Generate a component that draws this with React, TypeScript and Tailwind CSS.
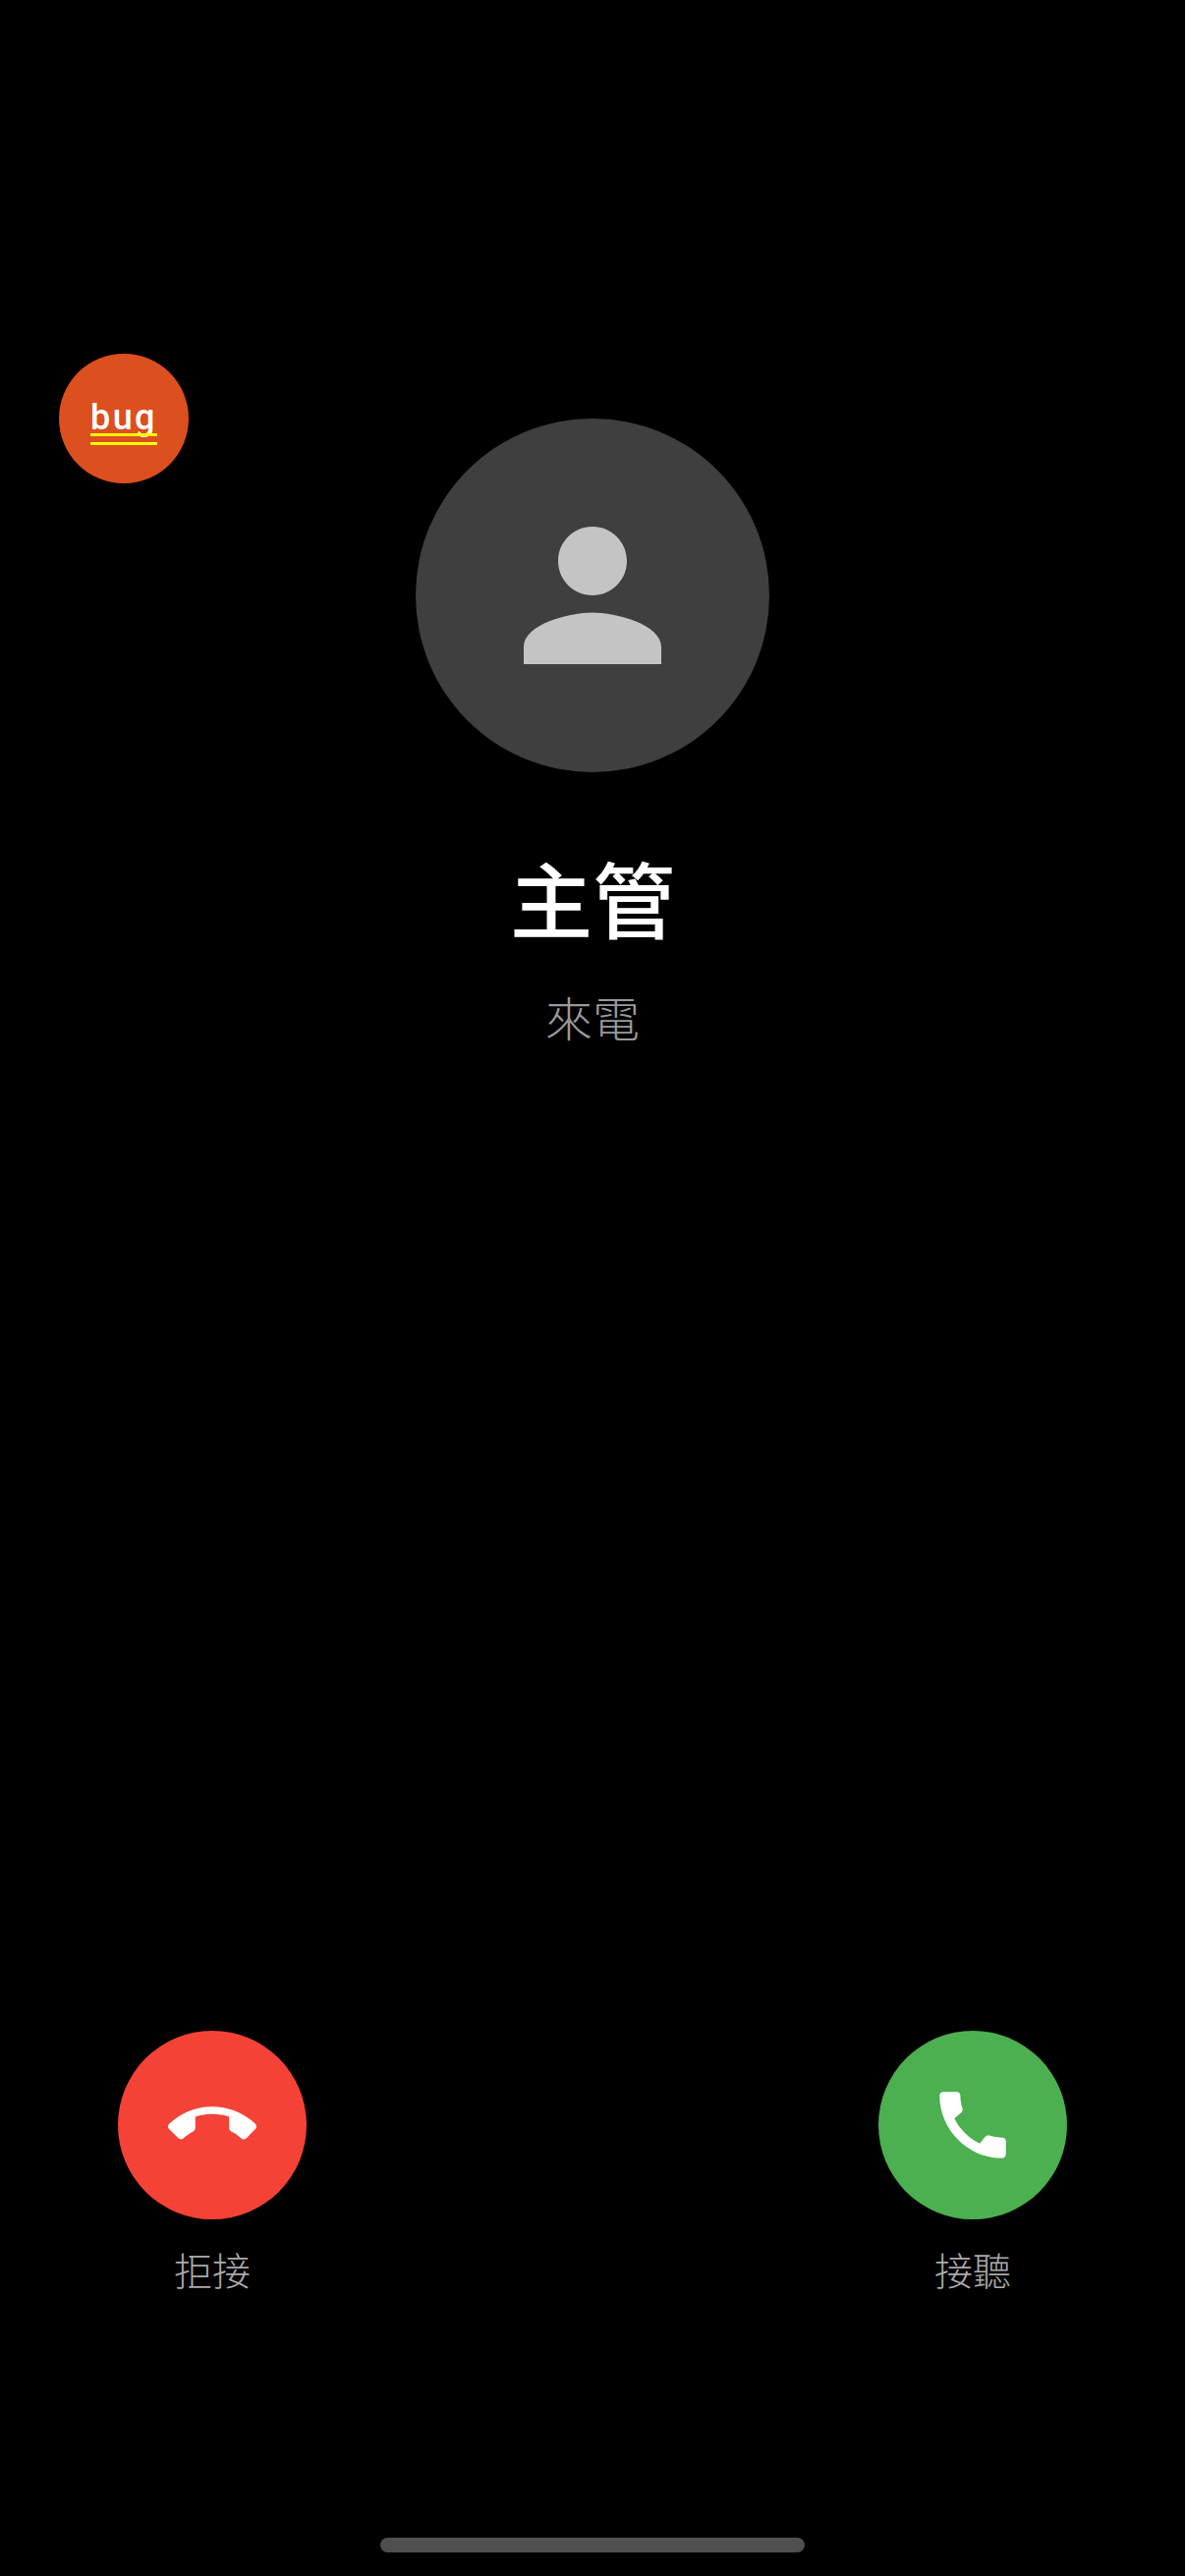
function PersonIcon() {
    return (
        <svg viewBox="0 0 24 24" className="h-[210px] w-[210px] fill-[#c4c4c4]">
            <path d="M12 12c2.21 0 4-1.79 4-4s-1.79-4-4-4-4 1.79-4 4 1.79 4 4 4zm0 2c-2.67 0-8 1.34-8 4v2h16v-2c0-2.66-5.33-4-8-4z" />
        </svg>
    );
}

function CallEndIcon() {
    return (
        <svg viewBox="0 0 24 24" className="h-[90px] w-[90px] fill-white">
            <path d="M12 9c-1.6 0-3.15.25-4.6.72v3.1c0 .39-.23.74-.56.9-.98.49-1.87 1.12-2.66 1.85-.18.18-.43.28-.7.28-.28 0-.53-.11-.71-.29L.29 13.08c-.18-.17-.29-.42-.29-.7 0-.28.11-.53.29-.71C3.34 8.78 7.46 7 12 7s8.66 1.78 11.71 4.67c.18.18.29.43.29.71 0 .28-.11.53-.29.71l-2.48 2.48c-.18.18-.43.29-.71.29-.27 0-.52-.11-.7-.28-.79-.74-1.69-1.36-2.67-1.85-.33-.16-.56-.51-.56-.9v-3.1C15.15 9.25 13.6 9 12 9z" />
        </svg>
    );
}

function CallIcon() {
    return (
        <svg viewBox="0 0 24 24" className="h-[90px] w-[90px] fill-white">
            <path d="M20.01 15.38c-1.23 0-2.42-.2-3.53-.56-.35-.12-.74-.03-1.01.24l-1.57 1.97c-2.83-1.35-5.48-3.9-6.89-6.83l1.95-1.66c.27-.28.35-.67.24-1.02-.37-1.11-.56-2.3-.56-3.53 0-.54-.45-.99-.99-.99H4.19C3.65 3 3 3.24 3 3.99 3 13.28 10.73 21 20.01 21c.71 0 .99-.63.99-1.18v-3.45c0-.54-.45-.99-.99-.99z" />
        </svg>
    );
}

export default function App() {
    return (
        <div lang="zh-Hant" className="relative flex h-[2622px] w-[1206px] flex-col items-center bg-black font-['Noto_Sans_CJK_TC',sans-serif]">
            {/* Floating bug button */}
            <div className="absolute left-[60px] top-[360px] flex h-[132px] w-[132px] flex-col items-center rounded-full bg-[#dc4f1e] pt-[47px]">
                <span className="font-['Roboto',sans-serif] text-[36px] font-medium leading-[36px] tracking-[2.4px] text-white">
                    bug
                </span>
                <div className="-mt-[2px] h-[12px] w-[68px] border-y-[3px] border-[#ffff00]" />
            </div>

            <div className="mt-[426px] flex h-[360px] w-[360px] items-center justify-center rounded-full bg-[#3f3f3f]">
                <PersonIcon />
            </div>

            <h1 className="mt-[67px] text-[84px] font-medium leading-[120px] text-white">主管</h1>
            <p className="mt-[26px] text-[48px] font-light leading-[70px] text-[#999999]">來電</p>

            {/* Reject / answer */}
            <div className="mt-auto flex w-full justify-between px-[120px]">
                <div className="flex w-[192px] flex-col items-center">
                    <div className="flex h-[192px] w-[192px] items-center justify-center rounded-full bg-[#f44336]">
                        <CallEndIcon />
                    </div>
                    <span className="mt-[20px] text-[39px] font-light leading-[60px] text-[#aaaaaa]">拒接</span>
                </div>
                <div className="flex w-[192px] flex-col items-center">
                    <div className="flex h-[192px] w-[192px] items-center justify-center rounded-full bg-[#4caf50]">
                        <CallIcon />
                    </div>
                    <span className="mt-[20px] text-[39px] font-light leading-[60px] text-[#aaaaaa]">接聽</span>
                </div>
            </div>

            {/* Home indicator */}
            <div className="mb-[24px] mt-[244px] h-[15px] w-[432px] rounded-full bg-[#4f4f4f]" />
        </div>
    );
}
